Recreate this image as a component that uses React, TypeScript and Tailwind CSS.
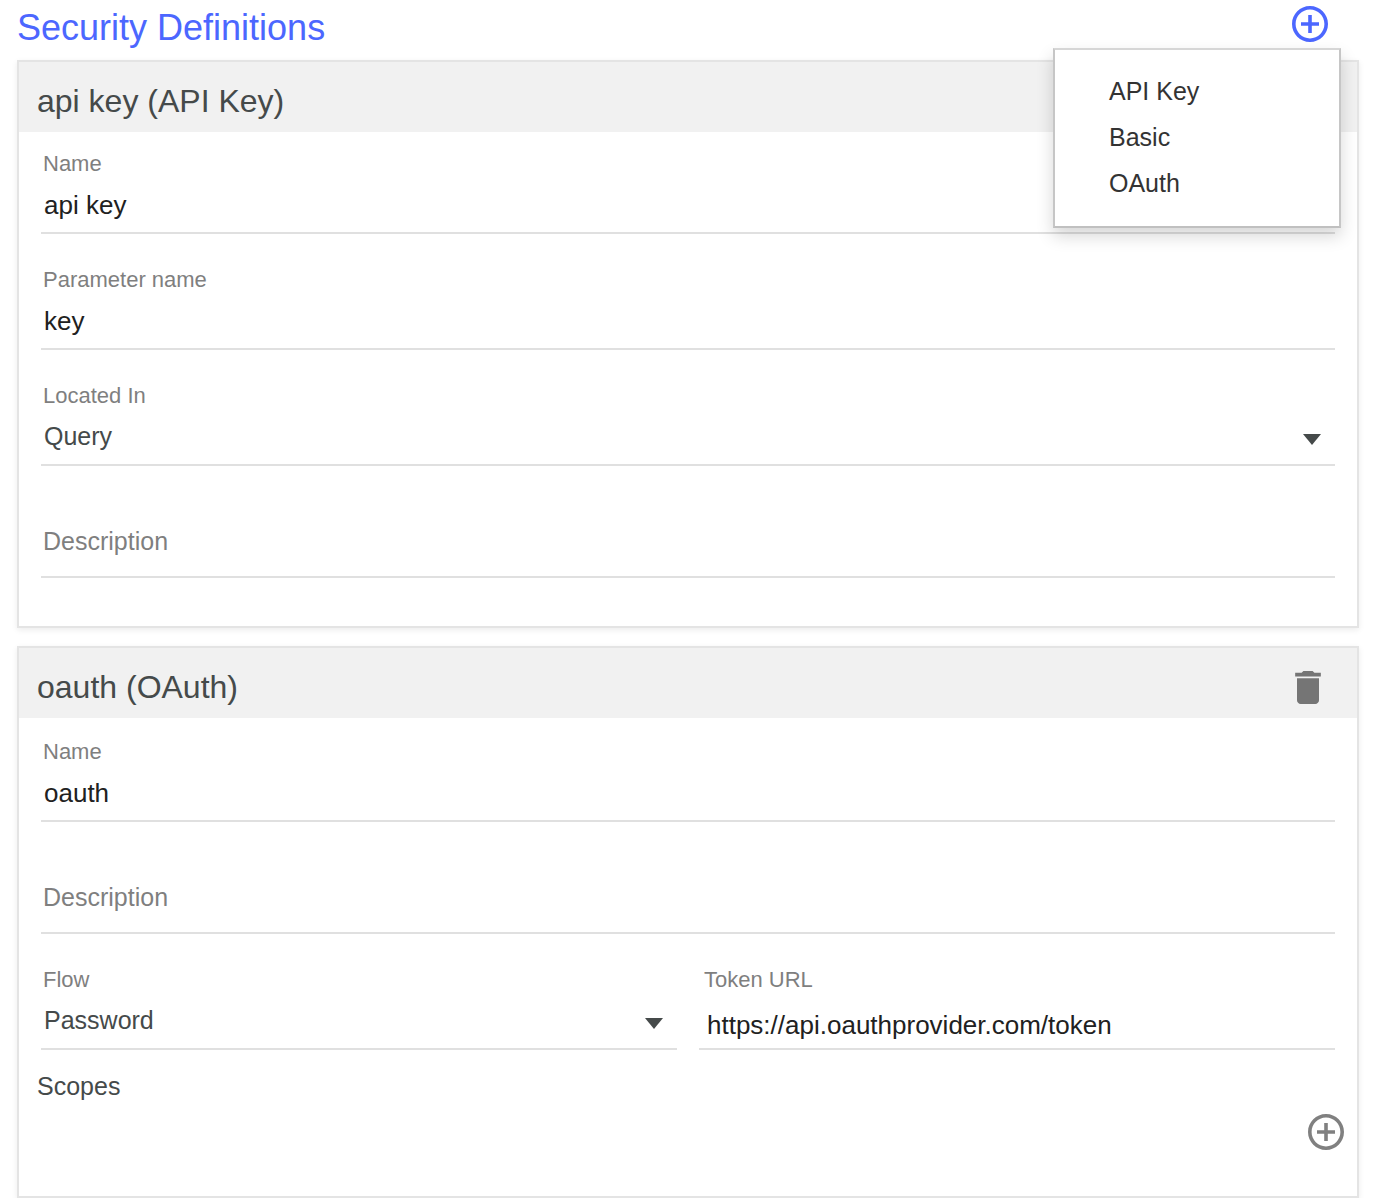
import { useState } from "react";
import type { ReactNode } from "react";

function AddIcon() {
  return (
    <svg viewBox="2 2 20 20" className="size-9" fill="currentColor" aria-hidden="true">
      <path d="M13 7h-2v4H7v2h4v4h2v-4h4v-2h-4V7zm-1-5C6.48 2 2 6.48 2 12s4.48 10 10 10 10-4.48 10-10S17.52 2 12 2zm0 18c-4.41 0-8-3.59-8-8s3.59-8 8-8 8 3.59 8 8-3.59 8-8 8z" />
    </svg>
  );
}

function Card({ title, action, children }: { title: string; action?: ReactNode; children: ReactNode }) {
  return (
    <section className="border-2 border-[#e4e4e4] bg-white shadow-[0_2px_6px_rgba(0,0,0,0.08)]">
      <header className="flex h-[70px] items-center justify-between bg-[#f1f1f1] pt-2 pr-9 pl-[18px]">
        <h2 className="text-[32px] leading-10 text-[#454a4a]">{title}</h2>
        {action}
      </header>
      {children}
    </section>
  );
}

const line = "block w-full border-b-2 border-[#e0e0e0] bg-transparent outline-none";

function TextField({ id, label, value, inset = false }: { id: string; label: string; value: string; inset?: boolean }) {
  return (
    <div>
      <label htmlFor={id} className={`block text-[22px] leading-7 text-[#7f7f7f] ${inset ? "pl-[5px]" : "pl-0.5"}`}>{label}</label>
      <input id={id} defaultValue={value} className={`${line} h-14 text-[26px] text-[#212121] ${inset ? "pt-2 pl-2" : "pl-[3px]"}`} />
    </div>
  );
}

function SelectField({ id, label, options }: { id: string; label: string; options: string[] }) {
  return (
    <div>
      <label htmlFor={id} className="block pl-0.5 text-[22px] leading-7 text-[#7f7f7f]">{label}</label>
      <div className="relative">
        <select id={id} className={`${line} h-14 appearance-none pl-[3px] text-[25px] text-[#454a4a]`}>
          {options.map((o) => <option key={o}>{o}</option>)}
        </select>
        <svg viewBox="0 0 18 11" className="pointer-events-none absolute top-6 right-3.5 h-[11px] w-[18px]" fill="#454a4a" aria-hidden="true">
          <path d="M0 0h18L9 11z" />
        </svg>
      </div>
    </div>
  );
}

function DescriptionField() {
  return (
    <input aria-label="Description" placeholder="Description" className={`${line} mt-2 h-[72px] pl-0.5 text-[25px] text-[#212121] placeholder:text-[#7f7f7f]`} />
  );
}

export default function App() {
  const [open, setOpen] = useState(true);
  return (
    <main className="bg-white pr-4 pl-[17px] font-['Liberation_Sans',Arial,sans-serif]">
      <div className="relative flex h-[60px] items-start justify-between pt-1.5 pr-[31px]">
        <h1 className="text-[36px] leading-11 text-[#4c67ff]">Security Definitions</h1>
        <button type="button" aria-label="Add security definition" aria-expanded={open} onClick={() => setOpen(!open)} className="text-[#4c67ff]">
          <AddIcon />
        </button>
        {open && (
          <ul className="absolute top-12 right-[18px] z-10 w-72 border-2 border-t-[#d6d6d6] border-r-[#c6c6c6] border-b-[#c0c0c0] border-l-[#c6c6c6] bg-white py-[19px] shadow-[0_8px_16px_rgba(0,0,0,0.16)]">
            {["API Key", "Basic", "OAuth"].map((name) => (
              <li key={name}>
                <button type="button" className="block h-[46px] w-full pl-[54px] text-left text-[25px] text-[#333333]">{name}</button>
              </li>
            ))}
          </ul>
        )}
      </div>

      <div className="flex flex-col gap-[18px]">
        <Card title="api key (API Key)">
          <div className="flex flex-col gap-8 px-[22px] pt-[18px] pb-12">
            <TextField id="key-name" label="Name" value="api key" />
            <TextField id="key-param" label="Parameter name" value="key" />
            <SelectField id="key-in" label="Located In" options={["Query", "Header"]} />
            <DescriptionField />
          </div>
        </Card>

        <Card
          title="oauth (OAuth)"
          action={
            <button type="button" aria-label="Delete oauth" className="text-[#757575]">
              <svg viewBox="5 3 14 18" className="h-[33px] w-[26px]" fill="currentColor" aria-hidden="true">
                <path d="M6 19c0 1.1.9 2 2 2h8c1.1 0 2-.9 2-2V7H6v12zM19 4h-3.5l-1-1h-5l-1 1H5v2h14V4z" />
              </svg>
            </button>
          }
        >
          <div className="flex flex-col gap-8 px-[22px] pt-5">
            <TextField id="oauth-name" label="Name" value="oauth" />
            <DescriptionField />
            <div className="grid grid-cols-2 gap-[22px]">
              <SelectField id="oauth-flow" label="Flow" options={["Password", "Implicit"]} />
              <TextField id="oauth-url" label="Token URL" value="https://api.oauthprovider.com/token" inset />
            </div>
          </div>
          <h3 className="pt-5 pl-[18px] text-[25px] leading-8 text-[#454a4a]">Scopes</h3>
          <div className="flex justify-end pt-3 pr-[13px] pb-[46px]">
            <button type="button" aria-label="Add scope" className="text-[#808080]">
              <AddIcon />
            </button>
          </div>
        </Card>
      </div>
    </main>
  );
}
